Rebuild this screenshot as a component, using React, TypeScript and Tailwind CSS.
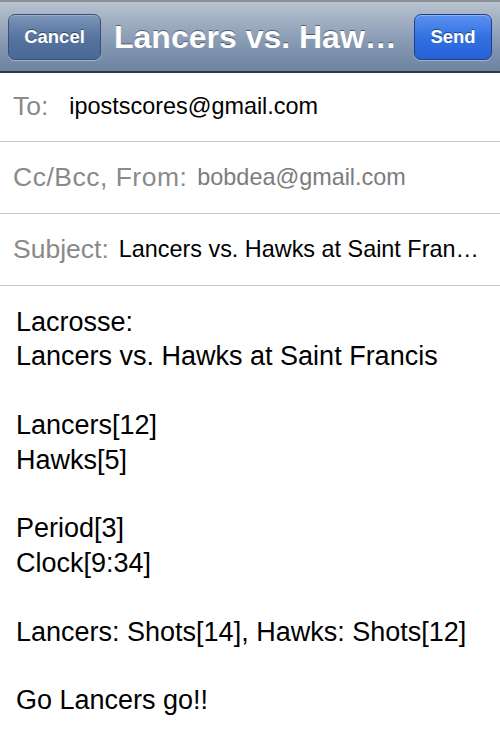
const font = { fontFamily: '"Liberation Sans", Arial, Helvetica, sans-serif' }

type FieldRowProps = {
  label: string
  value: string
  valueClassName: string
  gapClassName: string
  labelClassName?: string
}

function FieldRow({ label, value, valueClassName, gapClassName, labelClassName }: FieldRowProps) {
  return (
    <div className="flex h-[72px] items-center border-b border-[#c8c8c8] pl-[13px] pr-3">
      <span className={`shrink-0 text-[26.5px] leading-normal text-[#8a8a8a] ${labelClassName ?? ''}`}>
        {label}
      </span>
      <span className={`${gapClassName} min-w-0 truncate text-[23.4px] leading-normal ${valueClassName}`}>
        {value}
      </span>
    </div>
  )
}

const bodyLines = [
  'Lacrosse:',
  'Lancers vs. Hawks at Saint Francis',
  '',
  'Lancers[12]',
  'Hawks[5]',
  '',
  'Period[3]',
  'Clock[9:34]',
  '',
  'Lancers: Shots[14], Hawks: Shots[12]',
  '',
  'Go Lancers go!!',
]

export default function App() {
  return (
    <div className="h-[750px] w-[500px] overflow-hidden bg-white" style={font}>
      {/* nav bar */}
      <div className="flex h-[73px] items-center justify-between border-t-2 border-b-2 border-t-[#8a8f96] border-b-[#2f3a48] bg-gradient-to-b from-[#b9c3d0] via-[#8d9fb7] to-[#6d83a1] px-2">
        <button className="flex h-[46px] w-[93px] shrink-0 items-center justify-center rounded-[7px] border border-[#3b5173] bg-gradient-to-b from-[#7d97bb] via-[#56749f] to-[#4a6897] text-[18.5px] font-bold text-white shadow-[inset_0_1px_0_rgba(255,255,255,0.25),0_1px_0_rgba(255,255,255,0.35)] [text-shadow:0_-1px_0_rgba(0,0,0,0.45)]">
          Cancel
        </button>
        <h1 className="min-w-0 flex-1 whitespace-nowrap pl-[13px] text-left text-[32px] font-bold leading-normal text-white [text-shadow:0_-1px_0_rgba(0,0,0,0.45)]">
          Lancers vs. Haw…
        </h1>
        <button className="flex h-[46px] w-[78px] shrink-0 items-center justify-center rounded-[7px] border border-[#1f3f86] bg-gradient-to-b from-[#5b92ef] via-[#3371e2] to-[#2562d8] text-[18.5px] font-bold text-white shadow-[inset_0_1px_0_rgba(255,255,255,0.3),0_1px_0_rgba(255,255,255,0.35)] [text-shadow:0_-1px_0_rgba(0,0,0,0.45)]">
          Send
        </button>
      </div>

      {/* header fields */}
      <div>
        <div className="flex h-[69px] items-center border-b border-[#c8c8c8] pl-[13px] pr-3">
          <span className="shrink-0 text-[26.5px] leading-normal text-[#8a8a8a]">To:</span>
          <span className="ml-[21px] min-w-0 truncate text-[23.4px] leading-normal text-black">
            ipostscores@gmail.com
          </span>
        </div>
        <FieldRow
          label="Cc/Bcc, From:"
          value="bobdea@gmail.com"
          valueClassName="text-[#7c7c7c]"
          gapClassName="ml-[10px]"
          labelClassName="tracking-[0.5px]"
        />
        <FieldRow
          label="Subject:"
          value="Lancers vs. Hawks at Saint Fran…"
          valueClassName="text-black"
          gapClassName="ml-[10px]"
        />
      </div>

      {/* message body */}
      <div className="px-4 pt-[19px] text-[27px] leading-[34.4px] text-black">
        {bodyLines.map((line, i) => (
          <p key={i} className="h-[34.4px] whitespace-pre">
            {line}
          </p>
        ))}
      </div>
    </div>
  )
}
